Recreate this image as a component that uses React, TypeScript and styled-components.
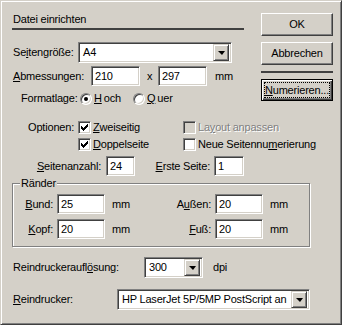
import styled, { createGlobalStyle } from 'styled-components';

const GlobalStyle = createGlobalStyle`
  html, body {
    margin: 0;
    padding: 0;
    background: #d4d0c8;
  }
  body {
    font-family: 'Liberation Sans', Arial, sans-serif;
    font-size: 11px;
  }
`;

// pixels of the classic 7x7 check mark
const CHECK = [
  [6, 0], [5, 1], [6, 1], [0, 2], [4, 2], [5, 2], [6, 2],
  [0, 3], [1, 3], [3, 3], [4, 3], [5, 3], [0, 4], [1, 4], [2, 4], [3, 4], [4, 4],
  [1, 5], [2, 5], [3, 5], [2, 6],
];
const checkPath = CHECK.map(([x, y]) => `M${x} ${y}h1v1h-1z`).join('');

const Check = ({ on, disabled }: { on?: boolean; disabled?: boolean }) => (
  <CheckBox $disabled={disabled}>
    {on && (
      <svg width="7" height="7" viewBox="0 0 7 7" shapeRendering="crispEdges">
        <path d={checkPath} fill="#000" />
      </svg>
    )}
  </CheckBox>
);

const Select = ({ value, width }: { value: string; width: number }) => (
  <SelectBox style={{ width }}>
    <SelectText>{value}</SelectText>
    <DropButton>
      <Arrow />
    </DropButton>
  </SelectBox>
);

const App = () => {
  return (
    <>
      <GlobalStyle />
      <Dialog>
        <Top>
          <Main>
            <Title>Datei einrichten</Title>
            <TitleRule />
            <FieldRow $mt={12}>
              <Label $w={66} $pl={1}>
                Se<u>i</u>tengröße:
              </Label>
              <Select value="A4" width={154} />
            </FieldRow>
            <FieldRow $mt={3}>
              <Label $w={79} $pl={1}>
                <u>A</u>bmessungen:
              </Label>
              <Field $w={49}>210</Field>
              <Label $w={18} $pl={7}>
                x
              </Label>
              <Field $w={49}>297</Field>
              <Label $w={30} $pl={8}>
                mm
              </Label>
            </FieldRow>
            <FieldRow $mt={6}>
              <Label $w={68} $pl={9}>
                Formatlage:
              </Label>
              <RadioItem $w={53}>
                <Radio $on />
                <u>H</u>och
              </RadioItem>
              <RadioItem $w={50}>
                <Radio />
                <u>Q</u>uer
              </RadioItem>
            </FieldRow>
          </Main>
          <Buttons>
            <Button>OK</Button>
            <Button $mt={6}>Abbrechen</Button>
            <ButtonRule />
            <DefaultButton>
              <Focus>
                <u>N</u>umerieren...
              </Focus>
            </DefaultButton>
          </Buttons>
        </Top>

        <Options>
          <Label $w={73} $align="right">
            Optionen:
          </Label>
          <CheckItem>
            <Check on />
            <span>
              <u>Z</u>weiseitig
            </span>
          </CheckItem>
          <CheckItem $disabled>
            <Check disabled />
            <span>
              La<u>y</u>out anpassen
            </span>
          </CheckItem>
          <span />
          <CheckItem>
            <Check on />
            <span>
              <u>D</u>oppelseite
            </span>
          </CheckItem>
          <CheckItem>
            <Check />
            <span>
              Neue Seitennu<u>m</u>erierung
            </span>
          </CheckItem>
        </Options>

        <FieldRow $mt={5}>
          <Label $w={105} $align="right" $pr={5}>
            <u>S</u>eitenanzahl:
          </Label>
          <Field $w={29}>24</Field>
          <Label $w={79} $align="right" $pr={4}>
            <u>E</u>rste Seite:
          </Label>
          <Field $w={30}>1</Field>
        </FieldRow>

        <Group>
          <Legend>Ränder</Legend>
          <GroupGrid>
            <Label $w={40} $align="right">
              <u>B</u>und:
            </Label>
            <Field $w={48}>25</Field>
            <Unit>mm</Unit>
            <Label $w={40} $align="right">
              A<u>u</u>ßen:
            </Label>
            <Field $w={48}>20</Field>
            <Unit>mm</Unit>
            <Label $w={40} $align="right">
              <u>K</u>opf:
            </Label>
            <Field $w={48}>20</Field>
            <Unit>mm</Unit>
            <Label $w={40} $align="right">
              <u>F</u>uß:
            </Label>
            <Field $w={48}>20</Field>
            <Unit>mm</Unit>
          </GroupGrid>
        </Group>

        <FieldRow $mt={10} $pl={12}>
          <Label $w={131}>
            Reindruckeraufl<u>ö</u>sung:
          </Label>
          <Select value="300" width={59} />
          <Label $w={30} $pl={10}>
            dpi
          </Label>
        </FieldRow>

        <FieldRow $mt={11} $pl={12}>
          <Label $w={104}>
            <u>R</u>eindrucker:
          </Label>
          <Select value="HP LaserJet 5P/5MP PostScript an" width={193} />
        </FieldRow>
      </Dialog>
    </>
  );
};

export default App;

const Dialog = styled.div`
  width: 342px;
  height: 325px;
  box-sizing: border-box;
  background: #d4d0c8;
  border: 1px solid;
  border-color: #d4d0c8 #404040 #404040 #d4d0c8;
  box-shadow: inset 1px 1px #fff, inset -1px -1px #808080;
  font-family: 'Liberation Sans', Arial, sans-serif;
  font-size: 11px;
  letter-spacing: -0.2px;
  line-height: 13px;
  color: #000;
  overflow: hidden;

  u {
    text-decoration: underline;
    text-underline-offset: 1px;
  }
`;

const Top = styled.div`
  display: flex;
  align-items: flex-start;
`;

const Main = styled.div`
  margin-left: 11px;
  width: 232px;
  flex: none;
`;

const Title = styled.div`
  margin-top: 12px;
  padding-left: 1px;
  height: 13px;
`;

const TitleRule = styled.div`
  margin-top: 2px;
  height: 2px;
  background: #404040;
`;

const FieldRow = styled.div<{ $mt: number; $pl?: number }>`
  display: flex;
  align-items: center;
  margin-top: ${(p) => p.$mt}px;
  padding-left: ${(p) => p.$pl ?? 0}px;
`;

const Label = styled.div<{
  $w: number;
  $align?: 'left' | 'right';
  $pl?: number;
  $pr?: number;
}>`
  flex: none;
  box-sizing: border-box;
  width: ${(p) => p.$w}px;
  padding-left: ${(p) => p.$pl ?? 0}px;
  padding-right: ${(p) => p.$pr ?? 0}px;
  text-align: ${(p) => p.$align ?? 'left'};
  white-space: nowrap;
`;

const sunken = `
  box-sizing: border-box;
  border: 1px solid;
  border-color: #808080 #fff #fff #808080;
  box-shadow: inset 1px 1px #404040, inset -1px -1px #d4d0c8;
`;

const raised = `
  box-sizing: border-box;
  border: 1px solid;
  border-color: #fff #404040 #404040 #fff;
  box-shadow: inset -1px -1px #808080;
`;

const Field = styled.div<{ $w: number }>`
  ${sunken}
  flex: none;
  width: ${(p) => p.$w}px;
  height: 20px;
  padding: 0 0 0 3px;
  background: #fff;
  line-height: 18px;
  white-space: nowrap;
`;

const SelectBox = styled.div`
  ${sunken}
  flex: none;
  display: flex;
  align-items: center;
  height: 21px;
  padding: 2px;
  background: #fff;
`;

const SelectText = styled.div`
  flex: 1;
  min-width: 0;
  padding-left: 2px;
  overflow: hidden;
  white-space: nowrap;
`;

const DropButton = styled.div`
  box-sizing: border-box;
  flex: none;
  width: 16px;
  height: 17px;
  display: flex;
  align-items: center;
  justify-content: center;
  background: #d4d0c8;
  border: 1px solid;
  border-color: #d4d0c8 #404040 #404040 #d4d0c8;
  box-shadow: inset 1px 1px #fff, inset -1px -1px #808080;
`;

const Arrow = styled.div`
  width: 0;
  height: 0;
  border-left: 4px solid transparent;
  border-right: 3px solid transparent;
  border-top: 4px solid #000;
  margin-left: 1px;
`;

const RadioItem = styled.div<{ $w: number }>`
  flex: none;
  width: ${(p) => p.$w}px;
  display: flex;
  align-items: center;
  gap: 2px;
  white-space: nowrap;
`;

const Radio = styled.div<{ $on?: boolean }>`
  position: relative;
  box-sizing: border-box;
  flex: none;
  width: 12px;
  height: 12px;
  border-radius: 50%;
  border: 1px solid;
  border-color: #808080 #fff #fff #808080;
  box-shadow: inset 1px 1px #404040, inset -1px -1px #d4d0c8;
  background: #fff;

  &::after {
    content: '';
    display: ${(p) => (p.$on ? 'block' : 'none')};
    position: absolute;
    left: 3px;
    top: 3px;
    width: 4px;
    height: 4px;
    border-radius: 50%;
    background: #000;
  }
`;

const Buttons = styled.div`
  margin-left: 17px;
  margin-top: 12px;
  width: 72px;
  flex: none;
  display: flex;
  flex-direction: column;
`;

const Button = styled.div<{ $mt?: number }>`
  ${raised}
  height: 23px;
  margin-top: ${(p) => p.$mt ?? 0}px;
  display: flex;
  align-items: center;
  justify-content: center;
  background: #d4d0c8;
`;

const ButtonRule = styled.div`
  margin-top: 6px;
  height: 2px;
  background: #404040;
`;

const DefaultButton = styled.div`
  box-sizing: border-box;
  margin-top: 6px;
  height: 22px;
  display: flex;
  align-items: center;
  justify-content: center;
  border: 1px solid #000;
  box-shadow: inset 1px 1px #fff, inset -1px -1px #404040, inset -2px -2px #808080;
  background: #d4d0c8;
  padding: 3px;
`;

const Focus = styled.div`
  flex: 1;
  align-self: stretch;
  display: flex;
  align-items: center;
  justify-content: center;
  outline: 1px dotted #000;
`;

const Options = styled.div`
  margin-top: 16px;
  display: grid;
  grid-template-columns: 73px 101px auto;
  column-gap: 4px;
  row-gap: 4px;
  align-items: center;
`;

const CheckItem = styled.div<{ $disabled?: boolean }>`
  display: flex;
  align-items: center;
  gap: 2px;
  white-space: nowrap;
  height: 13px;
  color: ${(p) => (p.$disabled ? '#808080' : '#000')};
  text-shadow: ${(p) => (p.$disabled ? '1px 1px #fff' : 'none')};
`;

const CheckBox = styled.div<{ $disabled?: boolean }>`
  ${sunken}
  flex: none;
  width: 13px;
  height: 13px;
  display: flex;
  align-items: center;
  justify-content: center;
  background: ${(p) => (p.$disabled ? '#d4d0c8' : '#fff')};
`;

const Group = styled.div`
  position: relative;
  box-sizing: border-box;
  margin: 7px 0 0 11px;
  width: 298px;
  height: 64px;
  padding-top: 10px;
  border: 1px solid #808080;
  box-shadow: inset 1px 1px #fff, 1px 1px #fff;
`;

const Legend = styled.div`
  position: absolute;
  left: 7px;
  top: -7px;
  padding: 0 1px;
  background: #d4d0c8;
`;

const GroupGrid = styled.div`
  display: grid;
  grid-template-columns: 40px 48px 58px 40px 48px auto;
  column-gap: 4px;
  row-gap: 5px;
  align-items: center;
`;

const Unit = styled.div`
  padding-left: 3px;
`;
